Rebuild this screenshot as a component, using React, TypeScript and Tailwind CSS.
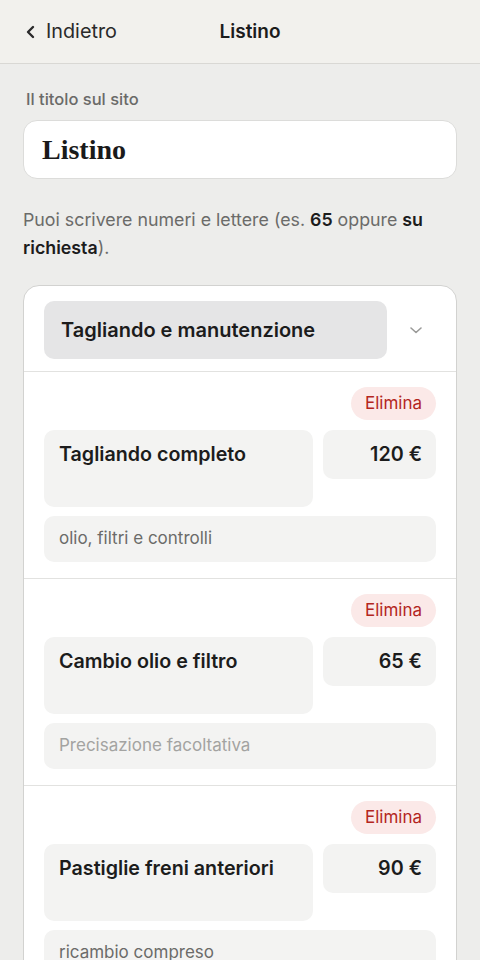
import React from "react";

const items = [
  { name: "Tagliando completo", price: "120 €", desc: "olio, filtri e controlli", placeholder: false },
  { name: "Cambio olio e filtro", price: "65 €", desc: "Precisazione facoltativa", placeholder: true },
  { name: "Pastiglie freni anteriori", price: "90 €", desc: "ricambio compreso", placeholder: false },
];

export default function App() {
  return (
    <div className="w-[480px] h-[960px] overflow-hidden bg-[#ededeb] text-[#1c1c1c]" style={{ fontFamily: "Inter, 'Noto Sans', sans-serif" }}>
      <header className="h-[64px] bg-[#f2f1ed] border-b border-[#d9d8d4] flex items-center relative">
        <div className="flex items-center pl-[24px] gap-[8px] text-[19.8px] text-[#2a2a2a] pt-[1px]">
          <svg width="14" height="16" viewBox="0 0 14 16" fill="none" stroke="#2a2a2a" strokeWidth="2.4" strokeLinecap="round" strokeLinejoin="round">
            <path d="M9 3 L4 8 L9 13" />
          </svg>
          <span>Indietro</span>
        </div>
        <div className="absolute left-[20px] right-0 text-center text-[19px] font-semibold pointer-events-none pt-[1px]">Listino</div>
      </header>

      <main className="px-[23px] pt-[23px]">
        <div className="pl-[3px] text-[16.5px] leading-[24px] font-medium text-[#6a6a68]">Il titolo sul sito</div>
        <div className="mt-[9px] h-[59px] bg-white rounded-[14px] border border-[#dcdcda] flex items-center pl-[18px]">
          <span className="text-[28px] font-bold text-[#1a1a1a]" style={{ fontFamily: "'Liberation Serif', 'DejaVu Serif', serif" }}>Listino</span>
        </div>
        <p className="mt-[27px] text-[17.8px] leading-[28px] text-[#6b6b69]">
          Puoi scrivere numeri e lettere (es. <b className="font-semibold text-[#1c1c1c]">65</b> oppure <b className="font-semibold text-[#1c1c1c]">su richiesta</b>).
        </p>

        <div className="mt-[23px] bg-white rounded-[16px] border border-[#d2d2d0]">
          <div className="flex items-center pl-[20px] pr-[12px] pt-[15px] pb-[12px] border-b border-[#e2e2e0]">
            <div className="w-[343px] h-[58px] bg-[#e5e5e6] rounded-[10px] flex items-center pl-[17px] text-[20px] font-semibold text-[#1c1c1c]">
              Tagliando e manutenzione
            </div>
            <div className="flex-1 flex justify-center">
              <svg width="14" height="10" viewBox="0 0 14 10" fill="none" stroke="#9a9a98" strokeWidth="1.6" strokeLinecap="round" strokeLinejoin="round">
                <path d="M2 3 L7 7.5 L12 3" />
              </svg>
            </div>
          </div>

          {items.map((it, i) => (
            <div key={i} className={`px-[20px] pt-[15px] pb-[16px] ${i < items.length - 1 ? "border-b border-[#e2e2e0]" : ""}`}>
              <div className="flex justify-end">
                <div className="h-[33px] px-[14px] rounded-full bg-[#fbe9e8] text-[#b3261e] text-[17px] flex items-center">Elimina</div>
              </div>
              <div className="mt-[10px] flex gap-[10px] items-start">
                <div className="w-[269px] h-[77px] bg-[#f3f3f2] rounded-[10px] pl-[15px] pt-[12px] text-[19.7px] leading-[24px] font-semibold text-[#1c1c1c]">
                  {it.name}
                </div>
                <div className="flex-1 h-[49px] bg-[#f3f3f2] rounded-[10px] pr-[14px] pt-[12px] text-right text-[19.7px] leading-[24px] font-semibold text-[#1c1c1c]">
                  {it.price}
                </div>
              </div>
              <div className={`mt-[9px] h-[46px] bg-[#f3f3f2] rounded-[10px] pl-[15px] flex items-center text-[17px] ${it.placeholder ? "text-[#a3a3a1]" : "text-[#6b6b69]"}`}>
                {it.desc}
              </div>
            </div>
          ))}
        </div>
      </main>
    </div>
  );
}
